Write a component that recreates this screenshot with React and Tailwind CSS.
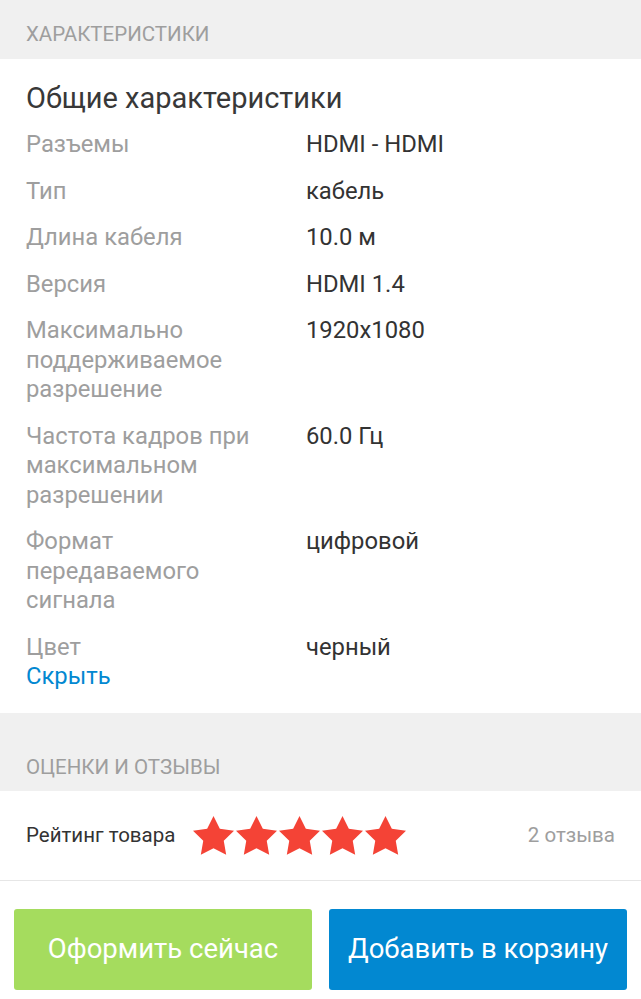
import React from 'react'

const specs = [
    { label: 'Разъемы', value: 'HDMI - HDMI' },
    { label: 'Тип', value: 'кабель' },
    { label: 'Длина кабеля', value: '10.0 м' },
    { label: 'Версия', value: 'HDMI 1.4' },
    { label: 'Максимально поддерживаемое разрешение', value: '1920x1080' },
    { label: 'Частота кадров при максимальном разрешении', value: '60.0 Гц' },
    { label: 'Формат передаваемого сигнала', value: 'цифровой' },
    { label: 'Цвет', value: 'черный' },
];

const Star = () => (
    <svg className="w-[43px] h-[41px]" viewBox="0 0 24 23" fill="#f44336">
        <path d="M12 0.5l3.55 7.2 7.95 1.15-5.75 5.6 1.36 7.9L12 18.6l-7.11 3.75 1.36-7.9L0.5 8.85l7.95-1.15z" />
    </svg>
);

const App = () => {
    return (
        <div className="w-[641px] min-h-[999px] bg-white" style={{ fontFamily: 'Roboto, "Noto Sans", sans-serif' }}>

            {/* Section header */}
            <div className="bg-[#f0f0f0] h-[59px] px-[26px] pt-[22px]">
                <p className="text-[20.5px] leading-[24px] text-[#9e9e9e] uppercase">Характеристики</p>
            </div>

            {/* Specs */}
            <div className="px-[26px] pt-[22px] pb-[21px]">
                <h2 className="text-[29px] leading-[34px] text-[#383838]">Общие характеристики</h2>
                <div className="flex flex-col gap-[17px] mt-[15px]">
                    {specs.map((s) => (
                        <div key={s.label} className="flex text-[23.8px] leading-[29.5px]">
                            <div className="w-[280px] pr-4 text-[#9e9e9e]">{s.label}</div>
                            <div className="flex-1 text-[#333]">{s.value}</div>
                        </div>
                    ))}
                </div>
                <a href="#" className="block text-[23.8px] leading-[29.5px] text-[#0288d1]">Скрыть</a>
            </div>

            {/* Reviews header */}
            <div className="bg-[#f0f0f0] h-[78px] px-[26px] pt-[42px]">
                <p className="text-[20.5px] leading-[24px] text-[#9e9e9e] uppercase">Оценки и отзывы</p>
            </div>

            {/* Rating */}
            <div className="h-[90px] px-[26px] flex items-center border-b border-[#e6e6e6]">
                <span className="text-[20.5px] text-[#333] mr-[17px]">Рейтинг товара</span>
                <div className="flex">
                    {[0, 1, 2, 3, 4].map((i) => <Star key={i} />)}
                </div>
                <span className="ml-auto text-[20.5px] text-[#9e9e9e]">2 отзыва</span>
            </div>

            {/* Actions */}
            <div className="flex gap-[17px] px-[14px] pt-[28px]">
                <button className="flex-1 h-[81px] rounded-[3px] bg-[#a5dc5e] text-white text-[27.5px]">Оформить сейчас</button>
                <button className="flex-1 h-[81px] rounded-[3px] bg-[#0288d1] text-white text-[27.5px]">Добавить в корзину</button>
            </div>
        </div>
    );
}

export default App;
